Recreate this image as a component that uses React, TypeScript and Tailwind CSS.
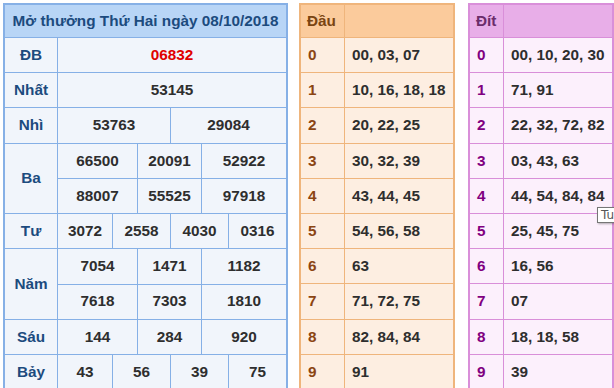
import React from "react";

const F = { fontFamily: '"Liberation Sans", Arial, sans-serif' };

function LRow({ label, h, children, last }: { label: string; h: string; children: React.ReactNode; last?: boolean }) {
  return (
    <div className={`flex ${h} ${last ? "" : "border-b"} border-[#86b0e6]`}>
      <div className="w-[53px] shrink-0 border-r border-[#86b0e6] flex items-center justify-center text-[#1c4b7e]">{label}</div>
      <div className="flex-1 flex flex-col">{children}</div>
    </div>
  );
}

function Cells({ widths, values, red, bottom }: { widths: string[]; values: string[]; red?: boolean; bottom?: boolean }) {
  return (
    <div className={`flex flex-1 ${bottom ? "border-b border-[#86b0e6]" : ""}`}>
      {values.map((v, i) => (
        <div
          key={i}
          className={`${widths[i] ?? "flex-1"} ${i < values.length - 1 ? "border-r border-[#86b0e6]" : ""} flex items-center justify-center ${red ? "text-[#e00000]" : "text-[#2e2e2e]"}`}
        >
          {v}
        </div>
      ))}
    </div>
  );
}

const W2 = ["w-[113px] shrink-0", "flex-1"];
const W3 = ["w-[80px] shrink-0", "w-[64px] shrink-0", "flex-1"];
const W4 = ["w-[55px] shrink-0", "w-[58px] shrink-0", "w-[58px] shrink-0", "flex-1"];

const dau = ["00, 03, 07", "10, 16, 18, 18", "20, 22, 25", "30, 32, 39", "43, 44, 45", "54, 56, 58", "63", "71, 72, 75", "82, 84, 84", "91"];
const dit = ["00, 10, 20, 30", "71, 91", "22, 32, 72, 82", "03, 43, 63", "44, 54, 84, 84", "25, 45, 75", "16, 56", "07", "18, 18, 58", "39"];
const rowH = ["h-[35px]", "h-[35px]", "h-[36px]", "h-[35px]", "h-[35px]", "h-[35px]", "h-[35px]", "h-[36px]", "h-[35px]", "h-[35px]"];

function SideTable({
  title,
  rows,
  border,
  head,
  body,
  titleColor,
  digitColor,
  labelW,
  ml,
}: {
  title: string;
  rows: string[];
  border: string;
  head: string;
  body: string;
  titleColor: string;
  digitColor: string;
  labelW: string;
  ml: string;
}) {
  return (
    <div className={`${ml} shrink-0 border-2 border-b-0 ${border} ${body}`}>
      <div className={`flex h-[33px] border-b ${border} ${head}`}>
        <div className={`${labelW} shrink-0 border-r ${border} flex items-center pl-[6px] ${titleColor}`}>{title}</div>
        <div className="w-[108px]" />
      </div>
      {rows.map((r, i) => (
        <div key={i} className={`flex ${rowH[i]} ${i < rows.length - 1 ? "border-b" : ""} ${border}`}>
          <div className={`${labelW} shrink-0 border-r ${border} flex items-center pl-[7px] ${digitColor}`}>{i}</div>
          <div className="w-[108px] flex items-center pl-[7px] text-[#2e2e2e]">{r}</div>
        </div>
      ))}
    </div>
  );
}

export default function App() {
  return (
    <div className="relative w-[614px] h-[388px] overflow-hidden bg-white text-[15.3px] font-bold" style={F}>
      <div className="flex items-start pl-[3px] pt-[3px]">
        {/* Left results table */}
        <div className="w-[285px] shrink-0 border-2 border-b-0 border-[#86b0e6] bg-[#f1f5fb]">
          <div className="h-[33px] border-b border-[#86b0e6] bg-[#b8d5f6] flex items-center justify-center text-[#1c4b7e]">
            Mở thưởng Thứ Hai ngày 08/10/2018
          </div>
          <LRow label="ĐB" h="h-[35px]">
            <Cells widths={["flex-1"]} values={["06832"]} red />
          </LRow>
          <LRow label="Nhất" h="h-[35px]">
            <Cells widths={["flex-1"]} values={["53145"]} />
          </LRow>
          <LRow label="Nhì" h="h-[36px]">
            <Cells widths={W2} values={["53763", "29084"]} />
          </LRow>
          <LRow label="Ba" h="h-[70px]">
            <Cells widths={W3} values={["66500", "20091", "52922"]} bottom />
            <Cells widths={W3} values={["88007", "55525", "97918"]} />
          </LRow>
          <LRow label="Tư" h="h-[35px]">
            <Cells widths={W4} values={["3072", "2558", "4030", "0316"]} />
          </LRow>
          <LRow label="Năm" h="h-[71px]">
            <Cells widths={W3} values={["7054", "1471", "1182"]} bottom />
            <Cells widths={W3} values={["7618", "7303", "1810"]} />
          </LRow>
          <LRow label="Sáu" h="h-[35px]">
            <Cells widths={W3} values={["144", "284", "920"]} />
          </LRow>
          <LRow label="Bảy" h="h-[35px]" last>
            <Cells widths={W4} values={["43", "56", "39", "75"]} />
          </LRow>
        </div>

        <SideTable
          title="Đầu"
          rows={dau}
          border="border-[#efb57c]"
          head="bg-[#fbcb9c]"
          body="bg-[#fdeee1]"
          titleColor="text-[#7a4512]"
          digitColor="text-[#8b4513]"
          labelW="w-[44px]"
          ml="ml-[11px]"
        />
        <SideTable
          title="Đít"
          rows={dit}
          border="border-[#d98fd9]"
          head="bg-[#e8aee8]"
          body="bg-[#fcf0fc]"
          titleColor="text-[#6b2d6b]"
          digitColor="text-[#800080]"
          labelW="w-[34px]"
          ml="ml-[13px]"
        />
      </div>

      {/* Browser tooltip */}
      <div
        className="absolute left-[597px] top-[207px] h-[16px] w-[40px] border border-[#767676] bg-white pl-[3px] text-[12px] font-normal leading-[14px] text-[#575757] shadow-[1px_1px_2px_rgba(0,0,0,0.3)]"
        style={{ fontFamily: '"DejaVu Sans", sans-serif' }}
      >
        Tu
      </div>
    </div>
  );
}
